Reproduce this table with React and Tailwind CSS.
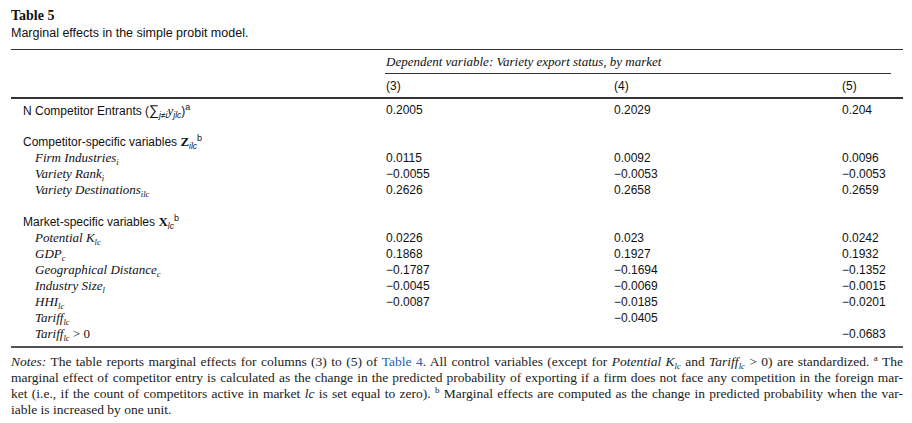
import React from "react";

const sans = "font-['Liberation_Sans',Arial,sans-serif]";
const serif = "font-['Liberation_Serif','Times_New_Roman',serif]";

function Sub({ children }) {
  return <span className="text-[8.5px] italic align-[-3px] leading-none">{children}</span>;
}
function Sup({ children }) {
  return <span className="text-[9px] not-italic align-[5px] leading-none">{children}</span>;
}

function Label({ children, indent, italic }) {
  return (
    <div
      className={`h-4 leading-4 whitespace-nowrap ${indent ? "pl-6" : "pl-3"} ${
        italic ? `${serif} italic text-[13px]` : `${sans} text-[12px]`
      }`}
    >
      {children}
    </div>
  );
}

function Row({ label, v3, v4, v5, indent = true, italic = true }) {
  return (
    <div className="grid grid-cols-[375px_228px_228px_61px] h-4 items-center">
      <Label indent={indent} italic={italic}>{label}</Label>
      <div className={`${sans} text-[12px] leading-4`}>{v3}</div>
      <div className={`${sans} text-[12px] leading-4`}>{v4}</div>
      <div className={`${sans} text-[12px] leading-4`}>{v5}</div>
    </div>
  );
}

const M = "\u2212";

export default function App() {
  return (
    <div className="w-[912px] h-[423px] bg-white text-[#111] pl-[11px] pt-[8px] overflow-hidden">
      <div className={`${serif} font-bold text-[14px] leading-[16px]`}>Table 5</div>
      <div className={`${sans} text-[12.5px] leading-[18px]`}>Marginal effects in the simple probit model.</div>

      <div className="w-[892px] mt-[7px]">
        <div className="h-px bg-[#333]" />
        <div className="grid grid-cols-[375px_517px] pt-[4px]">
          <div />
          <div>
            <div className={`${serif} italic text-[13px] leading-[16px]`}>
              Dependent variable: Variety export status, by market
            </div>
            <div className="h-px bg-[#333] w-[506px] -ml-px mt-[3px]" />
          </div>
        </div>
        <div className="grid grid-cols-[375px_228px_228px_61px] h-[23px] items-center">
          <div />
          <div className={`${sans} text-[12px]`}>(3)</div>
          <div className={`${sans} text-[12px]`}>(4)</div>
          <div className={`${sans} text-[12px]`}>(5)</div>
        </div>
        <div className="h-[1.5px] bg-[#333]" />
        <div className="pt-[3px]">
          <Row
            indent={false}
            italic={false}
            label={
              <span>
                N Competitor Entrants (<span className="text-[14px]">∑</span>
                <Sub>j≠i</Sub>
                <span className={`${serif} italic text-[13px]`}>y</span>
                <Sub>jlc</Sub>)<Sup>a</Sup>
              </span>
            }
            v3="0.2005"
            v4="0.2029"
            v5="0.204"
          />
          <div className="h-4" />
          <Row
            indent={false}
            italic={false}
            label={
              <span>
                Competitor-specific variables{" "}
                <span className={`${serif} font-bold text-[13px]`}>Z</span>
                <Sub>ilc</Sub>
                <Sup>b</Sup>
              </span>
            }
          />
          <Row label={<span>Firm Industries<Sub>i</Sub></span>} v3="0.0115" v4="0.0092" v5="0.0096" />
          <Row label={<span>Variety Rank<Sub>i</Sub></span>} v3={`${M}0.0055`} v4={`${M}0.0053`} v5={`${M}0.0053`} />
          <Row label={<span>Variety Destinations<Sub>ilc</Sub></span>} v3="0.2626" v4="0.2658" v5="0.2659" />
          <div className="h-4" />
          <Row
            indent={false}
            italic={false}
            label={
              <span>
                Market-specific variables{" "}
                <span className={`${serif} font-bold text-[13px]`}>X</span>
                <Sub>lc</Sub>
                <Sup>b</Sup>
              </span>
            }
          />
          <Row label={<span>Potential K<Sub>lc</Sub></span>} v3="0.0226" v4="0.023" v5="0.0242" />
          <Row label={<span>GDP<Sub>c</Sub></span>} v3="0.1868" v4="0.1927" v5="0.1932" />
          <Row label={<span>Geographical Distance<Sub>c</Sub></span>} v3={`${M}0.1787`} v4={`${M}0.1694`} v5={`${M}0.1352`} />
          <Row label={<span>Industry Size<Sub>l</Sub></span>} v3={`${M}0.0045`} v4={`${M}0.0069`} v5={`${M}0.0015`} />
          <Row label={<span>HHI<Sub>lc</Sub></span>} v3={`${M}0.0087`} v4={`${M}0.0185`} v5={`${M}0.0201`} />
          <Row label={<span>Tariff<Sub>lc</Sub></span>} v4={`${M}0.0405`} />
          <Row label={<span>Tariff<Sub>lc</Sub> <span className="not-italic">&gt; 0</span></span>} v5={`${M}0.0683`} />
        </div>
        <div className="h-[2px] bg-[#555] mt-[4px]" />
        <div className={`${serif} text-[13.5px] leading-4 pt-[6px] text-[#222]`}>
          <div className="text-justify [text-align-last:justify]">
            <i>Notes:</i> The table reports marginal effects for columns (3) to (5) of{" "}
            <span className="text-[#2a5db0]">Table 4</span>. All control variables (except for{" "}
            <i>Potential K</i>
            <Sub>lc</Sub> and <i>Tariff</i>
            <Sub>lc</Sub> &gt; 0) are standardized. <Sup>a</Sup> The
          </div>
          <div className="text-justify [text-align-last:justify] whitespace-nowrap">
            marginal effect of competitor entry is calculated as the change in the predicted probability of exporting if a firm does not face any competition in the foreign mar-
          </div>
          <div className="text-justify [text-align-last:justify]">
            ket (i.e., if the count of competitors active in market <i>lc</i> is set equal to zero). <Sup>b</Sup> Marginal effects are computed as the change in predicted probability when the var-
          </div>
          <div>iable is increased by one unit.</div>
        </div>
      </div>
    </div>
  );
}
